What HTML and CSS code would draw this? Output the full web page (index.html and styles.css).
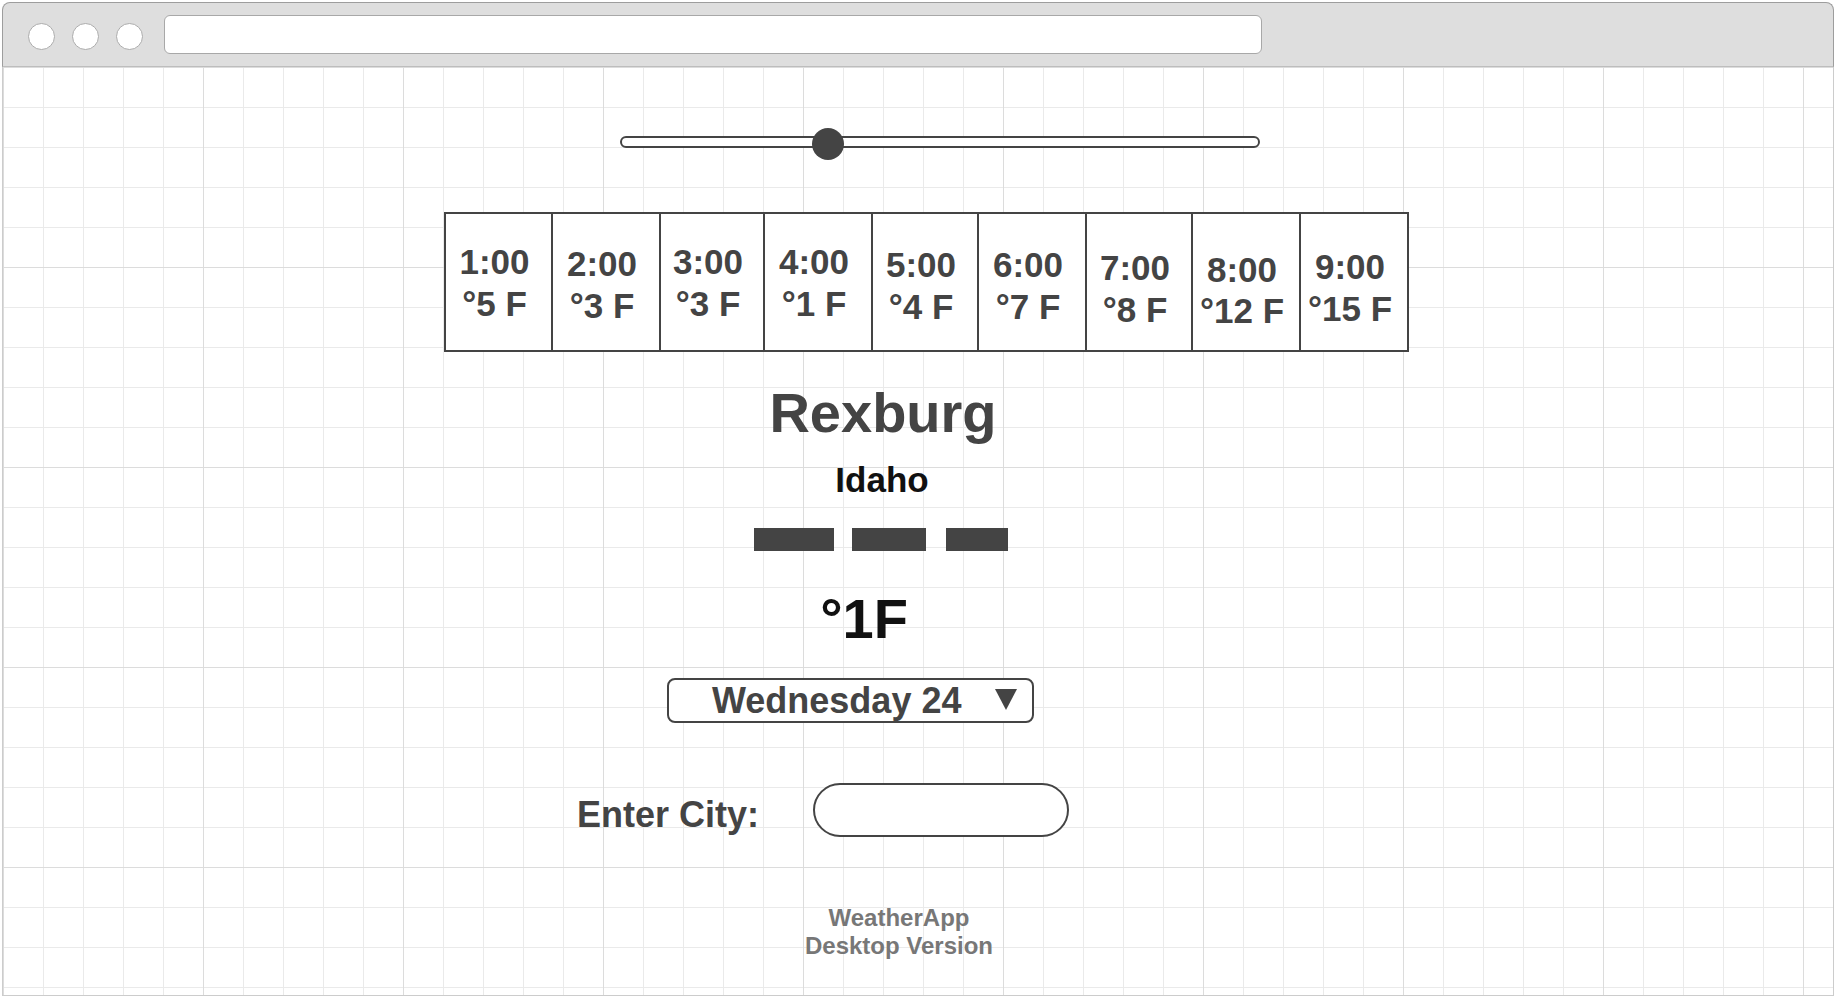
FILE: index.html
```html
<!DOCTYPE html>
<html lang="en">
<head>
<meta charset="utf-8">
<title>WeatherApp Desktop Version</title>
<link rel="stylesheet" href="styles.css">
</head>
<body>
<div class="window">
  <div class="chrome">
    <span class="dot"></span>
    <span class="dot"></span>
    <span class="dot"></span>
    <div class="urlbar"></div>
  </div>
  <div class="stage">
    <div class="slider">
      <div class="track"></div>
      <div class="knob"></div>
    </div>

    <div class="hours">
      <div class="cell c1"><span>1:00</span><span>°5 F</span></div>
      <div class="cell c2"><span>2:00</span><span>°3 F</span></div>
      <div class="cell c3"><span>3:00</span><span>°3 F</span></div>
      <div class="cell c4"><span>4:00</span><span>°1 F</span></div>
      <div class="cell c5"><span>5:00</span><span>°4 F</span></div>
      <div class="cell c6"><span>6:00</span><span>°7 F</span></div>
      <div class="cell c7"><span>7:00</span><span>°8 F</span></div>
      <div class="cell c8"><span>8:00</span><span>°12 F</span></div>
      <div class="cell c9"><span>9:00</span><span>°15 F</span></div>
    </div>

    <div class="city">Rexburg</div>
    <div class="state">Idaho</div>

    <div class="bars">
      <span class="bar b1"></span>
      <span class="bar b2"></span>
      <span class="bar b3"></span>
    </div>

    <div class="temp">°1F</div>

    <div class="dropdown">
      <span class="day">Wednesday 24</span>
      <svg class="caret" width="22" height="21" viewBox="0 0 22 21"><polygon points="0,0 22,0 11,21" fill="#444"/></svg>
    </div>

    <div class="cityrow">
      <label class="citylabel">Enter City:</label>
      <div class="cityinput"></div>
    </div>

    <div class="footer">
      <div>WeatherApp</div>
      <div>Desktop Version</div>
    </div>
  </div>
</div>
</body>
</html>
```

FILE: styles.css
```css
html, body {
  margin: 0;
  padding: 0;
  background: #ffffff;
}

body {
  font-family: "Liberation Sans", Arial, Helvetica, sans-serif;
  font-weight: bold;
  color: #444444;
}

.window {
  margin: 2px 2px 0 2px;
  height: 994px;
  display: flex;
  flex-direction: column;
}

.chrome {
  box-sizing: border-box;
  height: 65px;
  flex: none;
  background: #dedede;
  border: 1px solid #9d9d9d;
  border-bottom: 1px solid #bdbdbd;
  border-radius: 8px 8px 0 0;
  display: flex;
  align-items: center;
  padding: 3px 0 0 25px;
}

.dot {
  box-sizing: border-box;
  width: 27px;
  height: 27px;
  border-radius: 50%;
  background: #ffffff;
  border: 1.5px solid #acacac;
  margin-right: 17px;
  flex: none;
}

.dot:nth-child(3) {
  margin-right: 21px;
}

.urlbar {
  box-sizing: border-box;
  width: 1098px;
  height: 39px;
  margin-top: -3px;
  background: #ffffff;
  border: 1.5px solid #a8a8a8;
  border-radius: 6px;
}

.stage {
  flex: 1;
  box-sizing: border-box;
  border: 1px solid #cccccc;
  border-top: none;
  background-color: #ffffff;
  background-image:
    linear-gradient(to right, #dcdcdc 1px, transparent 1px),
    linear-gradient(to bottom, #dcdcdc 1px, transparent 1px),
    linear-gradient(to right, #eaeaea 1px, transparent 1px),
    linear-gradient(to bottom, #eaeaea 1px, transparent 1px);
  background-size: 200px 200px, 200px 200px, 40px 40px, 40px 40px;
  display: flex;
  flex-direction: column;
  align-items: flex-start;
}

/* slider */
.slider {
  position: relative;
  margin: 61px 0 0 617px;
  width: 640px;
  height: 32px;
}

.track {
  box-sizing: border-box;
  margin-top: 8px;
  height: 12px;
  border: 2px solid #444444;
  border-radius: 6px;
  background: #ffffff;
}

.knob {
  position: absolute;
  left: 192px;
  top: 0;
  width: 32px;
  height: 32px;
  border-radius: 50%;
  background: #444444;
}

/* hourly table */
.hours {
  margin: 52px 0 0 441px;
  display: flex;
  height: 140px;
  box-sizing: border-box;
  border-top: 2px solid #444444;
  border-bottom: 2px solid #444444;
  border-right: 2px solid #444444;
  background: #ffffff;
}

.cell {
  box-sizing: border-box;
  border-left: 2px solid #444444;
  display: flex;
  flex-direction: column;
  align-items: center;
  padding-right: 8px;
  font-size: 35px;
  line-height: 42px;
  white-space: nowrap;
}

.c1 { width: 107px; padding-top: 27px; }
.c2 { width: 108px; padding-top: 29px; }
.c3 { width: 104px; padding-top: 27px; }
.c4 { width: 108px; padding-top: 27px; }
.c5 { width: 106px; padding-top: 30px; }
.c6 { width: 108px; padding-top: 30px; }
.c7 { width: 106px; padding-top: 33px; }
.c8 { width: 108px; padding-top: 35px; line-height: 41px; }
.c9 { width: 108px; padding-top: 32px; }

/* location */
.city {
  margin: 31px 0 0 730px;
  width: 300px;
  text-align: center;
  font-size: 56px;
  line-height: 60px;
  color: #444444;
}

.state {
  margin: 17px 0 0 729px;
  width: 300px;
  text-align: center;
  font-size: 35px;
  line-height: 40px;
  color: #111111;
}

.bars {
  margin: 28px 0 0 751px;
  display: flex;
  height: 23px;
}

.bar {
  display: block;
  height: 23px;
  background: #444444;
}

.b1 { width: 80px; margin-right: 18px; }
.b2 { width: 74px; margin-right: 20px; }
.b3 { width: 62px; }

.temp {
  margin: 38px 0 0 711px;
  width: 300px;
  text-align: center;
  font-size: 56px;
  line-height: 60px;
  color: #111111;
}

/* day dropdown */
.dropdown {
  box-sizing: border-box;
  margin: 29px 0 0 664px;
  width: 367px;
  height: 45px;
  border: 2px solid #444444;
  border-radius: 8px;
  background: #ffffff;
  display: flex;
  align-items: center;
  padding: 0 15px 0 43px;
}

.day {
  font-size: 36px;
  line-height: 41px;
  white-space: nowrap;
}

.caret {
  margin-left: auto;
  margin-top: -2px;
  flex: none;
}

/* city entry */
.cityrow {
  margin: 60px 0 0 574px;
  display: flex;
  align-items: flex-end;
  height: 54px;
}

.citylabel {
  font-size: 36px;
  line-height: 44px;
  white-space: nowrap;
  margin-right: 54px;
}

.cityinput {
  box-sizing: border-box;
  width: 256px;
  height: 54px;
  border: 2px solid #444444;
  border-radius: 27px;
  background: #ffffff;
}

/* footer */
.footer {
  margin: 67px 0 0 746px;
  width: 300px;
  text-align: center;
  font-size: 24px;
  line-height: 28px;
  color: #777777;
}
```
